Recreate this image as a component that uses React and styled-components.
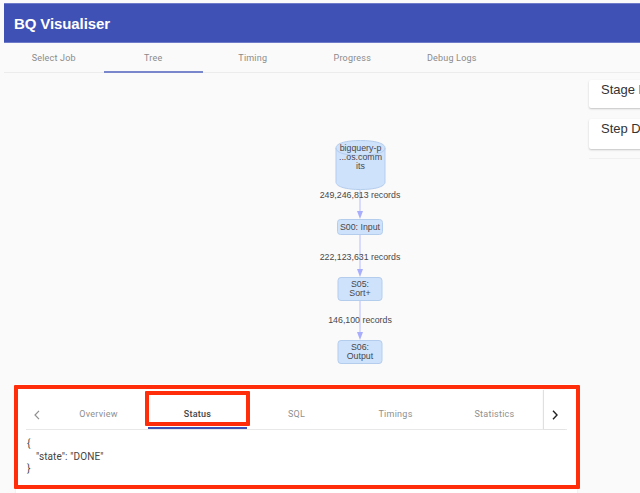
import React from "react";
import styled, { createGlobalStyle } from "styled-components";

const Global = createGlobalStyle`
  html, body { margin: 0; padding: 0; background: #fafafa; }
  * { box-sizing: border-box; }
`;
const Page = styled.div`
  position: relative;
  width: 640px;
  height: 493px;
  overflow: hidden;
  background: #fafafa;
  padding-top: 3px;
  padding-left: 4px;
  font-family: "Liberation Sans", Arial, sans-serif;
`;
const Header = styled.header`
  height: 40px;
  background: #3f51b5;
  color: #fff;
  display: flex;
  align-items: center;
  padding-left: 10px;
  font-size: 15px;
  font-weight: 700;
  letter-spacing: -0.1px;
  border-top: 1px solid #6d7bc9;
  border-bottom: 1px solid #6d7bc9;
`;
const Nav = styled.nav`
  height: 30px;
  display: flex;
  border-bottom: 1px solid #ececec;
`;
const NavTab = styled.div`
  width: 99.5px;
  display: flex;
  align-items: center;
  justify-content: center;
  padding-top: 1px;
  font-family: Roboto, sans-serif;
  font-size: 9px;
  letter-spacing: 0.2px;
  color: #8a8a8a;
  margin-bottom: -1px;
  border-bottom: 2px solid ${p => (p.$active ? "#7986cb" : "transparent")};
`;
const Body = styled.div`
  display: flex;
`;
const Main = styled.main`
  width: 585px;
  flex: none;
  display: flex;
  flex-direction: column;
`;
const Graph = styled.svg`
  display: block;
  width: 585px;
  height: 311px;
`;
const Side = styled.aside`
  flex: none;
  width: 60px;
  padding-top: 7px;
  display: flex;
  flex-direction: column;
  gap: 11px;
`;
const SideCard = styled.div`
  height: ${p => p.$h}px;
  background: #fff;
  border-radius: 2px 0 0 2px;
  box-shadow: 0 1px 2px rgba(0, 0, 0, 0.22);
  padding: 2px 0 0 12px;
  font-size: 13px;
  line-height: 16px;
  color: #333;
  white-space: nowrap;
  overflow: hidden;
`;
const SideRule = styled.div`
  height: 1px;
  margin-top: -2px;
  background: #f0f0f0;
`;
const Panel = styled.section`
  margin-left: 12px;
  width: 561px;
  height: 110px;
  background: #fff;
  padding: 6px 10px 0 10px;
  box-shadow: 0 1px 2px rgba(0, 0, 0, 0.1);
`;
const TabBar = styled.div`
  display: flex;
  height: 40px;
  border-bottom: 1px solid #e8e8e8;
`;
const Arrow = styled.div`
  flex: none;
  width: ${p => p.$w}px;
  display: flex;
  align-items: center;
  justify-content: center;
  padding-top: 11px;
  padding-right: ${p => (p.$divider ? 0 : 2)}px;
  box-shadow: ${p => (p.$divider ? "-1px 0 1px rgba(0, 0, 0, 0.12)" : "none")};
`;
const PanelTab = styled.div`
  width: 99px;
  flex: none;
  display: flex;
  align-items: center;
  justify-content: center;
  padding-top: 11px;
  font-family: Roboto, sans-serif;
  font-size: 9px;
  letter-spacing: 0.25px;
  color: ${p => (p.$active ? "#444" : "#8f8f8f")};
  font-weight: ${p => (p.$active ? 500 : 400)};
  border-bottom: 2px solid ${p => (p.$active ? "#3f51b5" : "transparent")};
`;
const Code = styled.div`
  margin-top: 8px;
  font-family: Roboto, sans-serif;
  font-size: 10px;
  letter-spacing: 0.1px;
  line-height: 12.5px;
  color: #444;
`;
const CodeLine = styled.div`
  padding-left: ${p => (p.$indent ? 10 : 1)}px;
  white-space: pre;
`;
const Callout = styled.div`
  position: absolute;
  left: ${p => p.$x}px;
  top: ${p => p.$y}px;
  width: ${p => p.$w}px;
  height: ${p => p.$h}px;
  border: ${p => p.$b}px solid #ff2d0a;
  border-radius: 1px;
  pointer-events: none;
`;
const NodeText = styled.text`
  font-family: "Liberation Sans", Arial, sans-serif;
  font-size: 8.8px;
  fill: #484848;
  text-anchor: middle;
`;

const nodeStyle = { fill: "#cfe2fc", stroke: "#b4cdec", strokeWidth: 1 };

function Edge({ y1, y2 }) {
  return (
    <g>
      <line x1="360" x2="360" y1={y1} y2={y2 - 6} stroke="#c3c7ff" strokeWidth="1.2" />
      <path d={`M357 ${y2 - 8}L363 ${y2 - 8}L360 ${y2}Z`} fill="#a9aefc" />
    </g>
  );
}

function Node({ y, h, x = 338, w = 44, lines }) {
  const start = y + h / 2 + 3 - ((lines.length - 1) * 9) / 2 - (lines.length > 1 ? 0.5 : 0);
  return (
    <g>
      <rect x={x} y={y} width={w} height={h} rx="3" {...nodeStyle} />
      {lines.map((l, i) => (
        <NodeText key={l} x="360" y={start + i * 9.3}>{l}</NodeText>
      ))}
    </g>
  );
}

export default function App() {
  return (
    <Page>
      <Global />
      <Header>BQ Visualiser</Header>
      <Nav>
        <NavTab>Select Job</NavTab>
        <NavTab $active>Tree</NavTab>
        <NavTab>Timing</NavTab>
        <NavTab>Progress</NavTab>
        <NavTab>Debug Logs</NavTab>
      </Nav>
      <Body>
        <Main>
          <Graph viewBox="4 73 585 311">
            <Edge y1={190} y2={219} />
            <Edge y1={235} y2={277} />
            <Edge y1={301} y2={340} />
            <path d="M336 148C336 143 347 140.500 360.500 140.500C374 140.500 385 143 385 148L385 182C385 187 374 189.500 360.500 189.500C347 189.500 336 187 336 182Z" {...nodeStyle} />
            <path d="M336 148C336 153 347 155.500 360.500 155.500C374 155.500 385 153 385 148" fill="none" stroke="#b4cdec" />
            <NodeText x="360.500" y="150.500">bigquery-p</NodeText>
            <NodeText x="360.500" y="160">...os.comm</NodeText>
            <NodeText x="360.500" y="169">its</NodeText>
            <NodeText x="360" y="198">249,246,813 records</NodeText>
            <Node y={219.500} h={15} x={337.500} w={45} lines={["S00: Input"]} />
            <NodeText x="360" y="260">222,123,631 records</NodeText>
            <Node y={277.500} h={23} lines={["S05:", "Sort+"]} />
            <NodeText x="360" y="323">146,100 records</NodeText>
            <Node y={340.500} h={23} lines={["S06:", "Output"]} />
          </Graph>
          <Panel>
            <TabBar>
              <Arrow $w={23}>
                <svg width="8" height="10" viewBox="0 0 8 10" fill="none" stroke="#8f8f8f" strokeWidth="1.2"><path d="M6 .8L2 5l4 4.200" /></svg>
              </Arrow>
              <PanelTab>Overview</PanelTab>
              <PanelTab $active>Status</PanelTab>
              <PanelTab>SQL</PanelTab>
              <PanelTab>Timings</PanelTab>
              <PanelTab>Statistics</PanelTab>
              <Arrow $w={22} $divider>
                <svg width="8" height="10" viewBox="0 0 8 10" fill="none" stroke="#222" strokeWidth="1.4"><path d="M2 .8L6 5 2 9.200" /></svg>
              </Arrow>
            </TabBar>
            <Code>
              <CodeLine>{"{"}</CodeLine>
              <CodeLine $indent>{'"state": "DONE"'}</CodeLine>
              <CodeLine>{"}"}</CodeLine>
            </Code>
          </Panel>
        </Main>
        <Side>
          <SideCard $h={28}>Stage Details</SideCard>
          <SideCard $h={30}>Step Details</SideCard>
          <SideRule />
        </Side>
      </Body>
      <Callout $x={14} $y={385} $w={566} $h={104} $b={4} />
      <Callout $x={144.500} $y={391} $w={105} $h={35} $b={4} />
    </Page>
  );
}
